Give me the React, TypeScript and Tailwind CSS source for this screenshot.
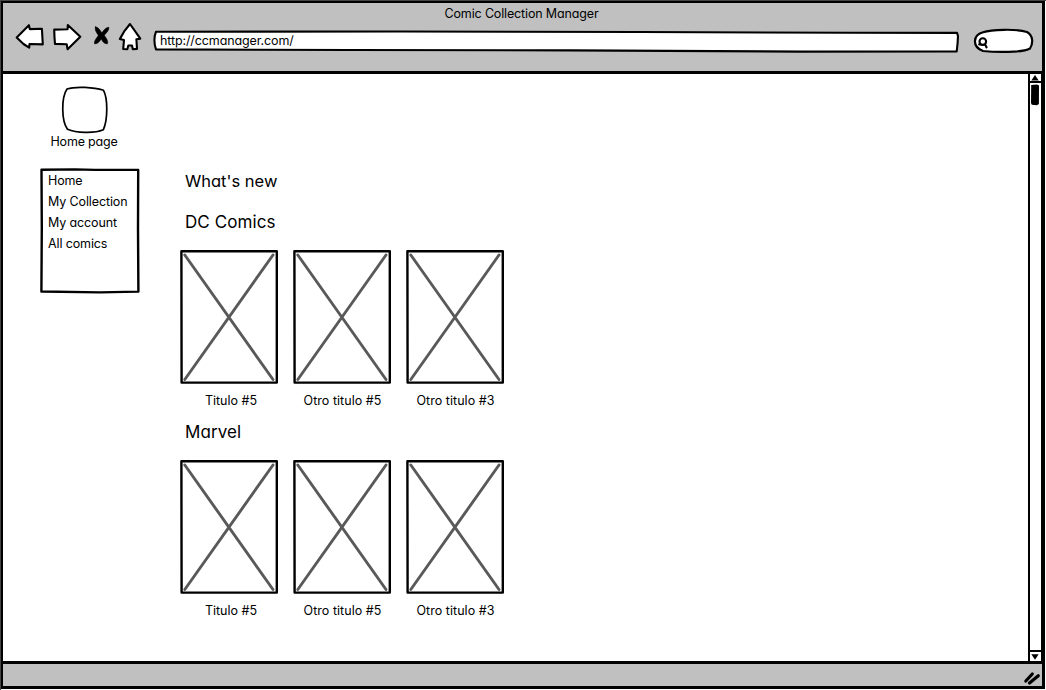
import React from "react";

const navigation = ["Home", "My Collection", "My account", "All comics"];

const sections = [
  { name: "DC Comics", comics: ["Titulo #5", "Otro titulo #5", "Otro titulo #3"] },
  { name: "Marvel", comics: ["Titulo #5", "Otro titulo #5", "Otro titulo #3"] },
];

function BrowserButtons() {
  return (
    <svg className="h-[34px] w-[132px] shrink-0" viewBox="12 20 132 34" fill="#fff" stroke="#000" strokeWidth="2.1" strokeLinejoin="round" strokeLinecap="round">
      <path d="M16.7 37.4 28.9 25.2 29.8 29.1 41.9 28.8 42.8 44.4 29.5 44 29.2 47.6 23.5 44Z" />
      <path d="M54.2 29.6 67.6 29.3 67.8 25 80.3 36.8 67.6 49.2 66.7 44.3 55 43.9 54.5 37.5Z" />
      <path d="M95.5 26.8C98.5 27.5 100 29.9 101.8 33 103.6 30.5 105 27.8 108.8 27.2 109.2 30.4 106.8 32.2 104.3 35.3 105.9 38 108.6 40.7 107.4 43.8 103.8 43.6 102.7 41.5 101.2 38.9 99.5 41.3 98 44 94.5 43.8 94 40.3 96.6 38.4 98.3 35.5 96.7 32.5 94.4 30.3 95.5 26.8Z" fill="#000" stroke="#000" strokeWidth="0.6" />
      <path d="M130 24 140.3 38.7 136.4 39.3 137 48.9 132.8 49.2 132 45.5 128.3 45.5 127.3 49.3 123.2 49 124 40.1 119.8 39.1 124.6 30.8Z" />
    </svg>
  );
}

function AddressBar() {
  return (
    <div className="relative mt-[9px] ml-[9px] h-[24px] w-[807px] shrink-0">
      <svg className="absolute inset-0 h-full w-full" viewBox="153 29 807 24" fill="#fff" stroke="#000" strokeWidth="2.1" strokeLinejoin="round">
        <path d="M156 31.7 400 31.5 640 32 850 32.8 957 32.9 958 36 957.6 43 956.7 51.5 800 51.6 570 50.4 350 50 156 49.4Q152.8 40 156 31.7Z" />
      </svg>
      <span className="relative block pl-[7px] pt-[2px] text-[12.5px] leading-[19px] tracking-[-0.11px] whitespace-nowrap">http://ccmanager.com/</span>
    </div>
  );
}

function SearchBox() {
  return (
    <svg className="mt-[7px] ml-[12px] h-[28px] w-[64px] shrink-0" viewBox="972 27 64 28" fill="#fff" stroke="#000" strokeWidth="2.2" strokeLinecap="round">
      <path d="M983 32.3C991 29.5 1016 28.5 1027 32C1033 35.5 1033.5 43 1030 48.5C1023 52.8 995 52.3 983 51C972 46.8 972.5 35.3 983 32.3Z" />
      <path d="M979.2 44.4H982M984.6 43.5 986.6 47.4" strokeWidth="2.1" />
      <circle cx="982.8" cy="41.6" r="3.3" strokeWidth="2.1" />
    </svg>
  );
}

function ComicCard({ title }: { title: string }) {
  return (
    <figure className="w-[98px]">
      <svg className="block h-[134px] w-[98px]" viewBox="0 0 98 134" fill="none">
        <path d="M1.4 1.3H96.8V132.6H1.6Z" stroke="#000" strokeWidth="2.4" strokeLinejoin="round" />
        <path d="M4.8 5 93 129.5M93 5 4.8 129.5" stroke="#595959" strokeWidth="2.9" strokeLinecap="round" />
      </svg>
      <figcaption className={`mt-[8px] text-center text-[12.5px] leading-[18px] whitespace-nowrap ${title.startsWith("Otro") ? "pl-px tracking-[0.04px]" : "pl-[4px]"}`}>{title}</figcaption>
    </figure>
  );
}

function Scrollbar() {
  return (
    <div className="flex w-[14px] shrink-0 flex-col border-r border-l-2 border-black">
      <div className="flex h-[9px] items-center justify-center border-b-2 border-black pr-px">
        <svg className="h-[6px] w-[8px]" viewBox="0 0 8 6"><path d="M4 0 7.7 5.6H.3Z" /></svg>
      </div>
      <svg className="mt-px h-[22px] w-[10px]" viewBox="0 0 10 22"><path d="M1.2 1 7 .6 9 1.4 8.9 20 7 21.3 1.8 20.8 1 19Z" /></svg>
      <div className="mt-auto flex h-[11px] items-center justify-center border-t-2 border-black pr-px">
        <svg className="h-[6px] w-[8px]" viewBox="0 0 8 6"><path d="M.3.3H7.7L4 5.8Z" /></svg>
      </div>
    </div>
  );
}

export default function App() {
  return (
    <div className="flex h-[690px] w-[1046px] flex-col border-t border-l border-[#454545] bg-white pr-px pb-px font-['Inter','Open_Sans',sans-serif] text-black [font-feature-settings:'cv11']">
      <div className="flex min-h-0 flex-1 flex-col border-t-2 border-r-[3px] border-b-[3px] border-l-2 border-black">
        <header className="h-[71px] shrink-0 border-b-[3px] border-black bg-[#c0c0c0]">
          <h1 className="pt-[2px] pr-[2px] text-center text-[12.5px] leading-[18px] tracking-[-0.15px] whitespace-nowrap">Comic Collection Manager</h1>
          <div className="-mt-[3px] flex items-start pl-[9px]">
            <BrowserButtons />
            <AddressBar />
            <SearchBox />
          </div>
        </header>

        <div className="flex min-h-0 flex-1">
          <aside className="w-[137px] shrink-0 pl-[37px] pt-[11px]">
            <div className="w-[88px]">
              <svg className="mx-auto block h-[50px] w-[50px]" viewBox="59 85 50 50" fill="none" stroke="#000" strokeWidth="1.7" strokeLinejoin="round">
                <path d="M67 89C76 86 94 87.4 103.5 90.3C107.8 98 108 119 103.3 129.8C94 133.8 76 132.8 67.5 129.2C61.5 121 61 98 67 89Z" />
              </svg>
              <p className="-mt-[2px] text-center text-[12.5px] leading-[18px] tracking-[-0.2px] whitespace-nowrap">Home page</p>
            </div>
            <nav className="relative mt-[17px] h-[126px] w-[100px]">
              <svg className="absolute inset-0 h-full w-full" viewBox="0 0 100 126" fill="none" stroke="#000" strokeWidth="2.4" strokeLinejoin="round">
                <path d="M1.5 1.7 35 1.4 55 1.9 98.2 1.9 98 60 98.4 123.6 60 124.4 1.4 123.5 1.8 60Z" />
              </svg>
              <ul className="relative pt-[3px] pl-[8px]">
                {navigation.map((item) => (
                  <li key={item} className="h-[21px] text-[12.5px] leading-[20px] tracking-[-0.12px] whitespace-nowrap">{item}</li>
                ))}
              </ul>
            </nav>
          </aside>

          <main className="flex-1 pl-[40px] pt-[95px]">
            <h2 className="pl-[5px] text-[16.5px] leading-[24px]">What's new</h2>
            {sections.map((section) => (
              <section key={section.name} className="pt-[17px]">
                <h3 className="pl-[5px] text-[17px] leading-[24px] tracking-[0.1px]">{section.name}</h3>
                <div className="mt-[16px] -mb-[7px] flex gap-[15px]">
                  {section.comics.map((comic) => (
                    <ComicCard key={comic} title={comic} />
                  ))}
                </div>
              </section>
            ))}
          </main>
          <Scrollbar />
        </div>

        <footer className="flex h-[25px] shrink-0 items-center justify-end border-t-[3px] border-black bg-[#c0c0c0] pr-px">
          <svg className="mt-[5px] h-[16px] w-[18px]" viewBox="1023 669 18 16" stroke="#000" strokeWidth="3.2" strokeLinecap="round">
            <path d="M1025.8 680 1032.3 673M1029.5 682 1038.3 674.8" />
          </svg>
        </footer>
      </div>
    </div>
  );
}
